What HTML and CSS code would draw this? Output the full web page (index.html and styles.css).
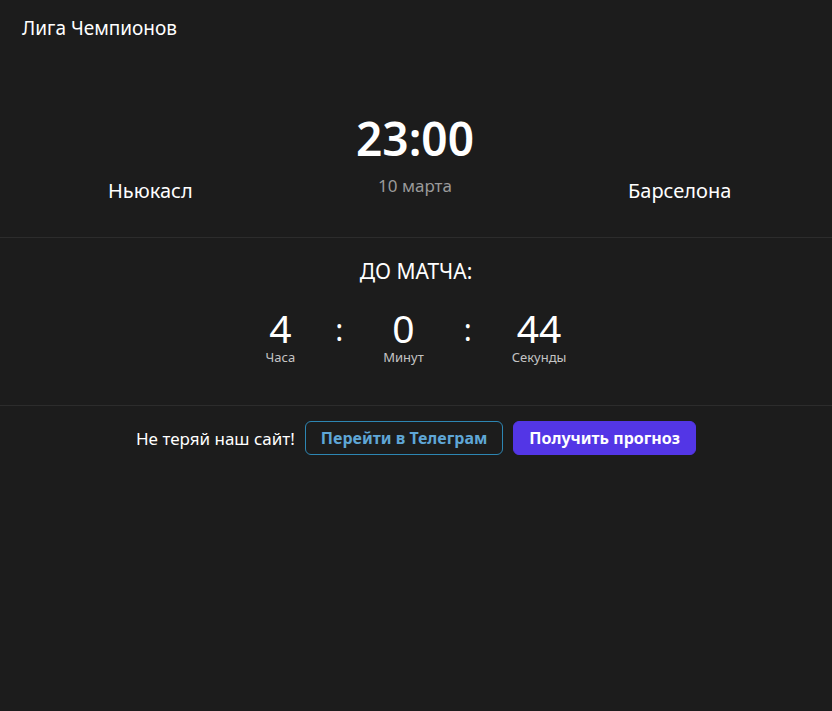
FILE: index.html
```html
<!DOCTYPE html>
<html lang="ru">

<head>
    <meta charset="UTF-8">
    <meta name="viewport" content="width=device-width, initial-scale=1.0">
    <title>Лига Чемпионов</title>
    <link rel="stylesheet" href="styles.css">
</head>

<body>
    <div class="league">Лига Чемпионов</div>

    <div class="match">
        <div class="team">Ньюкасл</div>
        <div class="kickoff">
            <div class="time">23:00</div>
            <div class="date">10 марта</div>
        </div>
        <div class="team">Барселона</div>
    </div>

    <div class="countdown">
        <div class="countdown-title">До матча:</div>
        <div class="timer">
            <div class="unit">
                <span class="value">4</span>
                <span class="label">Часа</span>
            </div>
            <span class="sep">:</span>
            <div class="unit">
                <span class="value">0</span>
                <span class="label">Минут</span>
            </div>
            <span class="sep">:</span>
            <div class="unit">
                <span class="value">44</span>
                <span class="label">Секунды</span>
            </div>
        </div>
    </div>

    <div class="promo">
        <span class="promo-text">Не теряй наш сайт!</span>
        <a class="btn btn-outline" href="#">Перейти в Телеграм</a>
        <a class="btn btn-primary" href="#">Получить прогноз</a>
    </div>
</body>

</html>
```

FILE: styles.css
```css
* {
    margin: 0;
    padding: 0;
    box-sizing: border-box;
}

body {
    background-color: #1c1c1c;
    color: #fff;
    font-family: 'Noto Sans', 'Open Sans', sans-serif;
    min-height: 100vh;
}

.league {
    font-size: 19px;
    line-height: 24px;
    padding: 16px 22px 0;
}

.match {
    display: grid;
    grid-template-columns: repeat(3, 1fr);
    align-items: start;
    padding: 0 20px 32px 18px;
    margin-top: 70px;
    border-bottom: 1px solid #2c2c2c;
}

.team {
    text-align: center;
    font-size: 20px;
    line-height: 28px;
    margin-top: 67px;
}

.kickoff {
    text-align: center;
}

.time {
    font-size: 46px;
    font-weight: 600;
    line-height: 56px;
}

.date {
    font-size: 17px;
    line-height: 24px;
    margin-top: 8px;
    color: #9a9a9a;
}

.countdown {
    padding: 19px 0 39px;
    border-bottom: 1px solid #2c2c2c;
    text-align: center;
}

.countdown-title {
    font-size: 21px;
    line-height: 28px;
    text-transform: uppercase;
}

.timer {
    display: flex;
    justify-content: center;
    align-items: flex-start;
    gap: 40px;
    margin-top: 23px;
}

.unit {
    display: flex;
    flex-direction: column;
    align-items: center;
}

.value {
    font-size: 39px;
    line-height: 40px;
}

.label {
    font-size: 13px;
    line-height: 18px;
    color: #c4c4c4;
}

.sep {
    font-size: 30px;
    line-height: 44px;
}

.promo {
    display: flex;
    justify-content: center;
    align-items: center;
    gap: 10px;
    padding-top: 15px;
}

.promo-text {
    font-size: 17px;
}

.btn {
    display: inline-block;
    font-size: 16px;
    font-weight: 700;
    line-height: 22px;
    padding: 5px 15px;
    border-radius: 6px;
    text-decoration: none;
}

.btn-outline {
    color: #5fa6d6;
    border: 1px solid #2d86b3;
}

.btn-primary {
    color: #fff;
    background-color: #5336e6;
    border: 1px solid #5336e6;
}
```
